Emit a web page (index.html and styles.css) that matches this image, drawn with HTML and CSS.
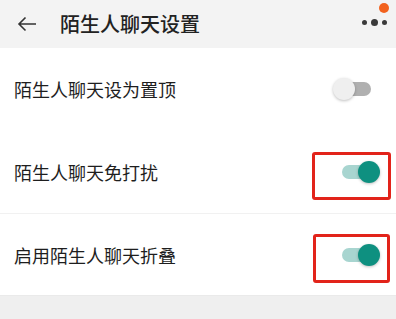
FILE: index.html
```html
<!DOCTYPE html>
<html lang="zh">
<head>
<meta charset="utf-8">
<link rel="stylesheet" href="styles.css">
</head>
<body>
<div class="page">
  <header class="bar">
    <svg class="back" width="20" height="16" viewBox="0 0 20 16"><path d="M19 8H2M8.5 1.5L2 8l6.5 6.5" fill="none" stroke="#333" stroke-width="1.6"/></svg>
    <span class="title">陌生人聊天设置</span>
    <div class="more">
      <span class="dot s"></span><span class="dot b"></span><span class="dot s"></span>
      <span class="badge"></span>
    </div>
  </header>
  <div class="list">
    <div class="row first">
      <span class="label">陌生人聊天设为置顶</span>
      <span class="switch off"><span class="track"></span><span class="thumb"></span></span>
    </div>
    <div class="row">
      <span class="label">陌生人聊天免打扰</span>
      <span class="switch on"><span class="track"></span><span class="thumb"></span></span>
      <span class="mark m1"></span>
    </div>
    <div class="row">
      <span class="label">启用陌生人聊天折叠</span>
      <span class="switch on"><span class="track"></span><span class="thumb"></span></span>
      <span class="mark m2"></span>
    </div>
  </div>
  <div class="foot"></div>
</div>
</body>
</html>
```
FILE: styles.css
```css
html, body { margin: 0; padding: 0; }
body { width: 396px; height: 319px; overflow: hidden; background: #efefef; font-family: "Noto Sans CJK SC", "Noto Sans", sans-serif; color: #222; }
.page { display: flex; flex-direction: column; height: 319px; }
.bar { height: 48px; background: #f3f3f3; display: flex; align-items: center; position: relative; flex: none; }
.back { margin-left: 17px; margin-right: 23px; }
.title { font-size: 20px; color: #222; line-height: 1; font-weight: 500; }
.more { position: absolute; right: 9px; top: 17px; display: flex; align-items: center; gap: 4px; height: 10px; }
.dot { border-radius: 50%; background: #3a3a3a; display: block; }
.dot.s { width: 5px; height: 5px; }
.dot.b { width: 7px; height: 7px; }
.badge { position: absolute; right: -2px; top: -14px; width: 10px; height: 10px; border-radius: 50%; background: #f2621e; }
.list { background: #fff; flex: none; }
.row { height: 83px; display: flex; align-items: center; justify-content: space-between; position: relative; border-bottom: 1px solid #f1f1f1; box-sizing: border-box; }
.row.first { border-bottom-color: #fff; }
.row:last-child { height: 82px; border-bottom-color: #eaeaea; }
.label { margin-left: 14px; font-size: 18px; color: #1e1e1e; }
.switch { position: relative; width: 38px; height: 24px; margin-right: 14px; }
.track { position: absolute; left: 10px; right: 0; top: 5px; height: 14px; border-radius: 7px; }
.thumb { position: absolute; top: 1px; width: 22px; height: 22px; border-radius: 50%; box-shadow: 0 1px 3px rgba(0,0,0,0.25); }
.off { margin-right: 25px; }
.off .track { left: 10px; background: #b0b0b0; right: 0; }
.off .thumb { left: 0; background: #efefef; }
.on { margin-right: 16px; }
.on .track { left: 0; right: 10px; background: #a8d5d0; }
.on .thumb { right: 0; background: #0e9080; }
.mark { position: absolute; border: 3px solid #e2231a; border-radius: 3px; box-sizing: border-box; }
.m1 { left: 312px; top: 21px; width: 79px; height: 48px; }
.m2 { left: 313px; top: 20px; width: 77px; height: 49px; }
.foot { flex: 1; background: #efefef; }
```
